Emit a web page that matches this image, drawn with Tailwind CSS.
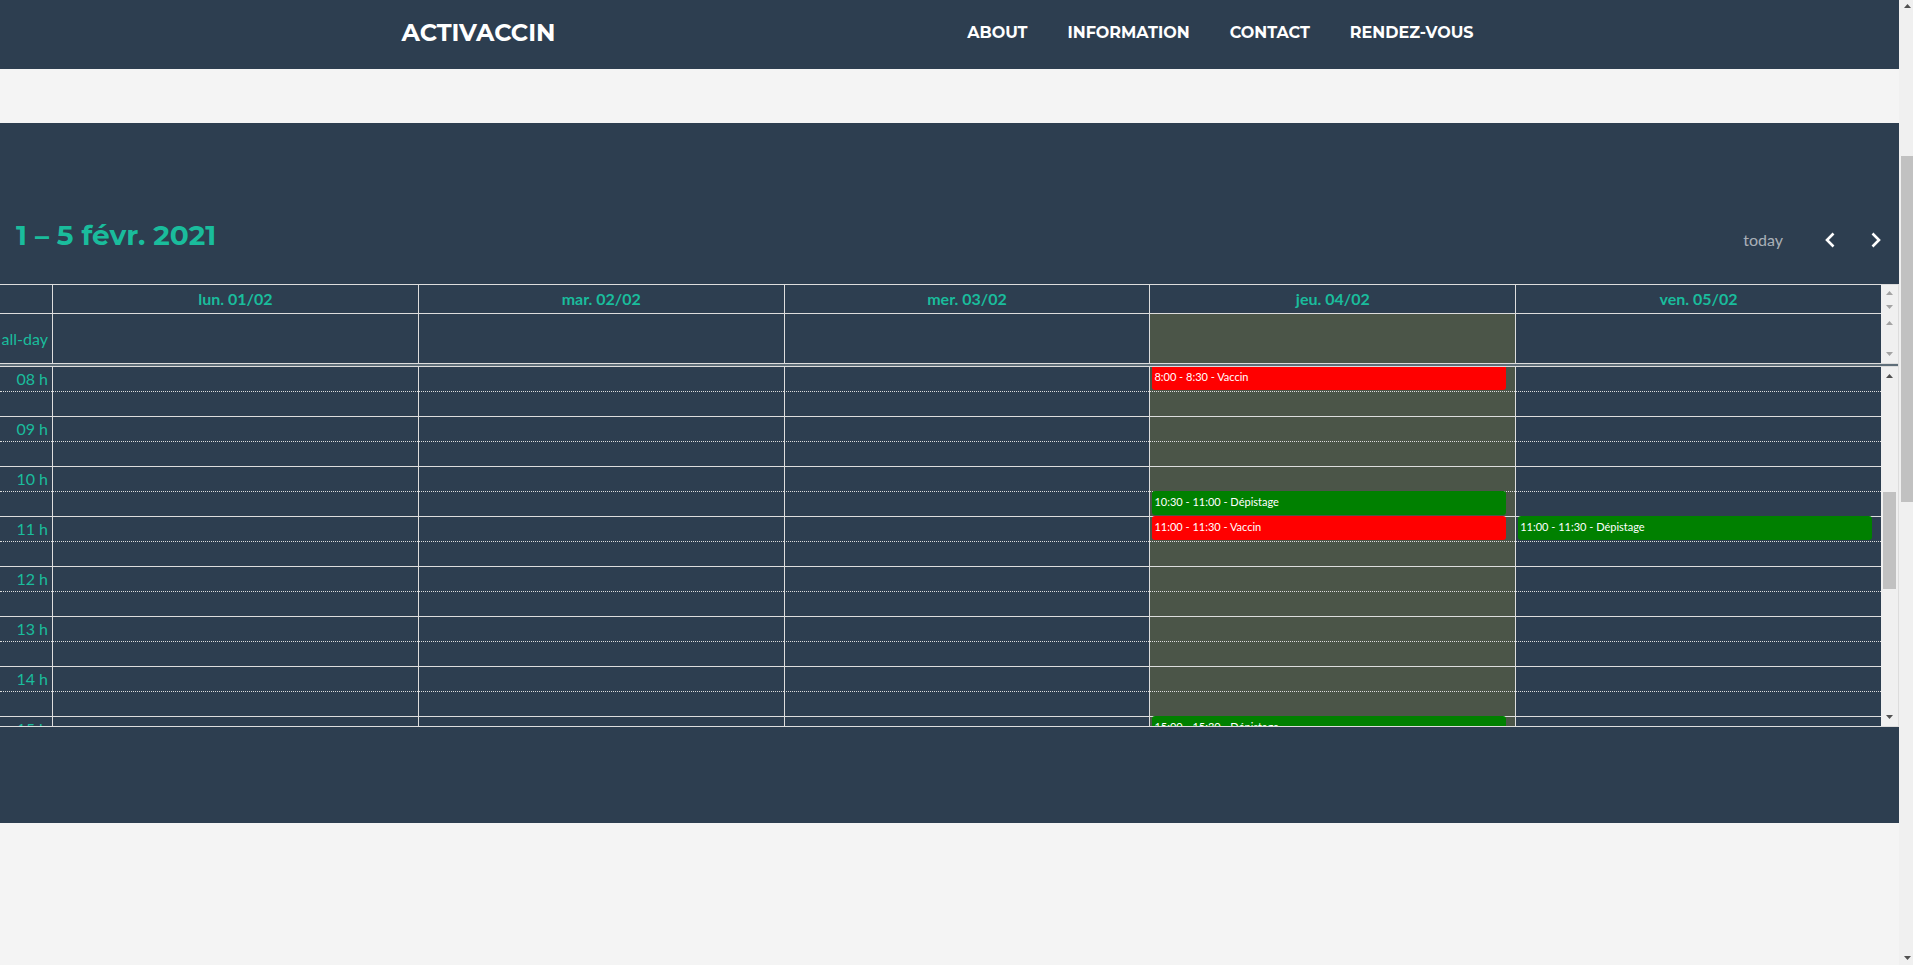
<!DOCTYPE html>
<html lang="fr">
<head>
<meta charset="utf-8">
<title>Activaccin</title>
<script src="https://cdn.jsdelivr.net/npm/@tailwindcss/browser@4"></script>
</head>
<body class="bg-[#f4f4f4] font-[Lato,sans-serif] text-base text-[#1abc9c]">
<div class="flex h-screen overflow-hidden">
  <div class="min-w-0 flex-1">
    <header class="bg-[#2d3e50] font-[Montserrat,Inter,sans-serif] font-bold text-white">
      <div class="mx-auto flex h-[69px] max-w-[1140px] items-start justify-between pt-[17px] pr-[46px] pl-[22px]">
        <a href="#" class="text-2xl leading-8">ACTIVACCIN</a>
        <nav class="flex gap-10 text-base leading-8">
          <a href="#about">ABOUT</a>
          <a href="#information">INFORMATION</a>
          <a href="#contact">CONTACT</a>
          <a href="#rendez-vous">RENDEZ-VOUS</a>
        </nav>
      </div>
    </header>

    <main class="mt-[54px] bg-[#2d3e50] pt-24 pb-24">
      <div class="flex h-[65px] items-start justify-between pr-2 pl-4">
        <h2 class="font-[Montserrat,Inter,sans-serif] text-[28px] leading-8 font-bold">1 – 5 févr. 2021</h2>
        <div class="flex items-center pt-[9px] text-white">
          <button type="button" disabled class="px-2 leading-6 text-white/60">today</button>
          <button type="button" aria-label="prev" class="ml-6 flex h-6 w-[30px] items-center justify-center"><svg width="12" height="16" viewBox="0 0 12 16" fill="none" stroke="currentColor" stroke-width="2.6"><path d="M9.5 1.5 3 8l6.500 6.500"/></svg></button>
          <button type="button" aria-label="next" class="ml-4 flex h-6 w-[30px] items-center justify-center"><svg width="12" height="16" viewBox="0 0 12 16" fill="none" stroke="currentColor" stroke-width="2.6"><path d="M2.500 1.500 9 8l-6.500 6.500"/></svg></button>
        </div>
      </div>

      <section class="border-y border-r border-[#ddd]">
        <div class="flex">
          <table class="w-full min-w-0 flex-1 table-fixed border-separate border-spacing-0">
            <colgroup><col class="w-[52px]"><col><col><col><col><col></colgroup>
            <thead>
              <tr class="h-7 *:border-[#ddd] *:p-0 *:font-bold">
                <th></th>
                <th class="border-l">lun. 01/02</th>
                <th class="border-l">mar. 02/02</th>
                <th class="border-l">mer. 03/02</th>
                <th class="border-l">jeu. 04/02</th>
                <th class="border-l">ven. 05/02</th>
              </tr>
            </thead>
            <tbody>
              <tr class="h-[50px] *:border-t *:border-[#ddd] *:p-0">
                <td class="pr-1! text-right whitespace-nowrap">all-day</td>
                <td class="border-l"></td>
                <td class="border-l"></td>
                <td class="border-l"></td>
                <td class="border-l bg-[#4b5548]"></td>
                <td class="border-l"></td>
              </tr>
            </tbody>
          </table>
          <div class="flex w-[17px] shrink-0 flex-col items-center bg-[#f0f0f0] text-[#a3a3a3]">
            <div class="flex h-7 flex-col justify-between pt-1.5 pb-1">
              <svg width="7" height="4" viewBox="0 0 7 4" fill="currentColor"><path d="M0 4 3.500 0 7 4z"/></svg>
              <svg width="7" height="4" viewBox="0 0 7 4" fill="currentColor"><path d="M0 0h7L3.500 4z"/></svg>
            </div>
            <div class="flex flex-1 flex-col justify-between pt-2 pb-[7px]">
              <svg width="7" height="4" viewBox="0 0 7 4" fill="currentColor"><path d="M0 4 3.500 0 7 4z"/></svg>
              <svg width="7" height="4" viewBox="0 0 7 4" fill="currentColor"><path d="M0 0h7L3.500 4z"/></svg>
            </div>
          </div>
        </div>

        <div class="h-1 border-y border-[#ddd] bg-[#5f6e79]"></div>

        <div class="flex h-[359px] overflow-hidden">
          <table id="slots" class="w-full min-w-0 flex-1 table-fixed self-start border-separate border-spacing-0">
            <colgroup><col class="w-[52px]"><col><col><col><col><col></colgroup>
            <tbody></tbody>
          </table>
          <div class="flex w-[17px] shrink-0 flex-col items-center bg-[#f0f0f0] py-[7px] text-[#505050]">
            <svg width="7" height="4" viewBox="0 0 7 4" fill="currentColor"><path d="M0 4 3.500 0 7 4z"/></svg>
            <div class="mt-[114px] mb-auto h-[97px] w-[13px] bg-[#c1c1c1]"></div>
            <svg width="7" height="4" viewBox="0 0 7 4" fill="currentColor"><path d="M0 0h7L3.500 4z"/></svg>
          </div>
        </div>
      </section>
    </main>
  </div>

  <div class="flex w-3.5 flex-col items-center bg-[#f0f0f0] pt-1 pb-[5px] pl-0.5 text-[#505050]">
    <svg width="7" height="4" viewBox="0 0 7 4" fill="currentColor"><path d="M0 4 3.500 0 7 4z"/></svg>
    <div class="mt-[148px] mb-auto h-[346px] w-full bg-[#c1c1c1]"></div>
    <svg width="7" height="4" viewBox="0 0 7 4" fill="currentColor"><path d="M0 0h7L3.500 4z"/></svg>
  </div>
</div>

<script>
  // Appointments, keyed by "half-hour slot index:day index"
  const events = {
    '0:3': ['8:00 - 8:30 - Vaccin', 'bg-[#ff0000]'],
    '5:3': ['10:30 - 11:00 - Dépistage', 'bg-[#008000]'],
    '6:3': ['11:00 - 11:30 - Vaccin', 'bg-[#ff0000]'],
    '6:4': ['11:00 - 11:30 - Dépistage', 'bg-[#008000]'],
    '14:3': ['15:00 - 15:30 - Dépistage', 'bg-[#008000]'],
  };
  let rows = '';
  for (let slot = 0; slot < 16; slot++) {
    const half = slot % 2;
    const line = slot === 0 ? '' : half ? '*:border-t *:[border-top-style:dotted]' : '*:border-t';
    const label = half ? '' : String(8 + slot / 2).padStart(2, '0') + ' h';
    rows += `<tr class="${slot === 0 ? 'h-6' : 'h-[25px]'} *:border-[#ddd] *:p-0 ${line}"><td class="pr-1! text-right leading-6">${label}</td>`;
    for (let day = 0; day < 5; day++) {
      const ev = events[slot + ':' + day];
      rows += `<td class="relative border-l [border-left-style:solid]! ${day === 3 ? 'bg-[#4b5548]' : ''}">` +
        (ev ? `<a href="#" class="absolute ${slot === 0 ? 'top-0 h-[23px] rounded-b-[3px] pt-px' : '-top-px h-6 rounded-[3px] pt-0.5'} right-[9px] left-0.5 z-10 px-0.5 text-[11px] leading-[18px] whitespace-nowrap text-white ${ev[1]}">${ev[0]}</a>` : '') +
        '</td>';
    }
    rows += '</tr>';
  }
  document.querySelector('#slots tbody').innerHTML = rows;
</script>
</body>
</html>
